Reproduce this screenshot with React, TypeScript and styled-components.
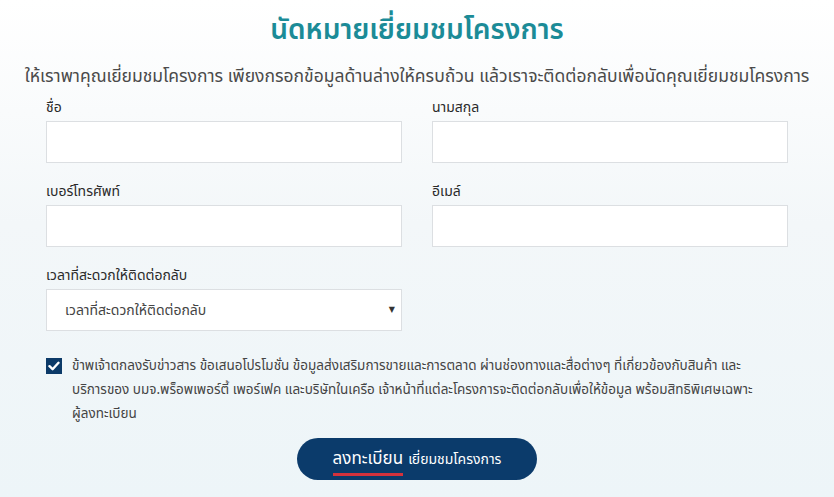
import React, { useState } from 'react';
import styled, { createGlobalStyle } from 'styled-components';

const GlobalStyle = createGlobalStyle`
  html, body {
    margin: 0;
    padding: 0;
  }
  body {
    font-family: "Noto Sans Thai", "Noto Sans", "DejaVu Sans", sans-serif;
    background: #fff;
  }
`;

type Field = {
  id: string,
  label: string,
  type: string,
}

const fields: Field[] = [
  { id: 'firstname', label: 'ชื่อ', type: 'text' },
  { id: 'lastname', label: 'นามสกุล', type: 'text' },
  { id: 'phone', label: 'เบอร์โทรศัพท์', type: 'tel' },
  { id: 'email', label: 'อีเมล์', type: 'email' },
];

const App = () => {
  const [agree, setAgree] = useState<boolean>(true);

  return (
    <>
      <GlobalStyle />
      <Page>
        <Title>นัดหมายเยี่ยมชมโครงการ</Title>
        <Lead>
          ให้เราพาคุณเยี่ยมชมโครงการ เพียงกรอกข้อมูลด้านล่างให้ครบถ้วน แล้วเราจะติดต่อกลับเพื่อนัดคุณเยี่ยมชมโครงการ
        </Lead>
        <Form onSubmit={e => e.preventDefault()}>
          <Grid>
            {fields.map(f => (
              <Group key={f.id}>
                <Label htmlFor={f.id}>{f.label}</Label>
                <Input id={f.id} type={f.type} />
              </Group>
            ))}
            <Group>
              <Label htmlFor="time">เวลาที่สะดวกให้ติดต่อกลับ</Label>
              <SelectBox>
                <Select id="time" defaultValue="">
                  <option value="">เวลาที่สะดวกให้ติดต่อกลับ</option>
                  <option value="morning">09:00 - 12:00</option>
                  <option value="afternoon">12:00 - 17:00</option>
                </Select>
                <Caret>▼</Caret>
              </SelectBox>
            </Group>
          </Grid>
          <Consent>
            <Check $checked={agree} onClick={() => setAgree(!agree)}>
              {agree && (
                <svg width="12" height="10" viewBox="0 0 12 10">
                  <path d="M1.5 5.2 L4.6 8.2 L10.5 1.8" fill="none" stroke="#fff" strokeWidth="2.4" strokeLinecap="round" strokeLinejoin="round" />
                </svg>
              )}
            </Check>
            <ConsentText>
              ข้าพเจ้าตกลงรับข่าวสาร ข้อเสนอโปรโมชั่น ข้อมูลส่งเสริมการขายและการตลาด ผ่านช่องทางและสื่อต่างๆ ที่เกี่ยวข้องกับสินค้า และ<br />
              บริการของ บมจ.พร็อพเพอร์ตี้ เพอร์เฟค และบริษัทในเครือ เจ้าหน้าที่แต่ละโครงการจะติดต่อกลับเพื่อให้ข้อมูล พร้อมสิทธิพิเศษเฉพาะ<br />
              ผู้ลงทะเบียน
            </ConsentText>
          </Consent>
          <Actions>
            <Submit type="submit">
              <Strong>ลงทะเบียน</Strong>
              <Small>เยี่ยมชมโครงการ</Small>
            </Submit>
          </Actions>
        </Form>
      </Page>
    </>
  );
};

const Page = styled.div`
  min-height: 497px;
  box-sizing: border-box;
  padding: 9px 0 0;
  background: linear-gradient(180deg, #ffffff 0%, #f3f7f9 45%, #edf5f8 100%);
  display: flex;
  flex-direction: column;
  align-items: center;
`;

const Title = styled.h1`
  margin: 0;
  font-size: 28px;
  font-weight: 600;
  line-height: 44px;
  color: #1b8b97;
`;

const Lead = styled.p`
  margin: 12px 0 0;
  font-size: 17.5px;
  line-height: 24px;
  color: #4a4a4a;
  white-space: nowrap;
`;

const Form = styled.form`
  width: 742px;
  margin-top: 9px;
`;

const Grid = styled.div`
  display: grid;
  grid-template-columns: 1fr 1fr;
  column-gap: 30px;
  row-gap: 19px;
`;

const Group = styled.div`
  display: flex;
  flex-direction: column;
`;

const Label = styled.label`
  font-size: 14px;
  font-weight: 400;
  line-height: 20px;
  color: #2a2a2a;
  margin-bottom: 3px;
`;

const Input = styled.input`
  height: 42px;
  box-sizing: border-box;
  border: 1px solid #dcdfe2;
  background: #fff;
  padding: 0 20px;
  font: inherit;
  font-size: 14px;
  outline: none;
`;

const SelectBox = styled.div`
  position: relative;
`;

const Select = styled.select`
  width: 100%;
  height: 42px;
  box-sizing: border-box;
  border: 1px solid #dcdfe2;
  border-radius: 0;
  background: #fff;
  padding: 0 18px;
  font: inherit;
  font-size: 14px;
  color: #444;
  appearance: none;
  outline: none;
`;

const Caret = styled.span`
  position: absolute;
  right: 7px;
  top: 50%;
  transform: translateY(-50%);
  font-size: 8px;
  color: #333;
  pointer-events: none;
`;

const Consent = styled.div`
  display: flex;
  align-items: flex-start;
  gap: 10px;
  margin-top: 23px;
`;

const Check = styled.span<{$checked: boolean}>`
  flex: none;
  width: 16px;
  height: 16px;
  margin-top: 4px;
  display: flex;
  align-items: center;
  justify-content: center;
  background: ${({$checked}) => $checked ? '#0c3a68' : '#fff'};
  border: 1px solid #0c3a68;
  box-sizing: border-box;
  cursor: pointer;
`;

const ConsentText = styled.p`
  margin: 0;
  font-size: 13.5px;
  line-height: 24px;
  color: #444;
`;

const Actions = styled.div`
  display: flex;
  justify-content: center;
  margin-top: 12px;
`;

const Submit = styled.button`
  width: 240px;
  height: 42px;
  border: none;
  border-radius: 21px;
  background: #0b3b6b;
  color: #fff;
  font: inherit;
  display: flex;
  align-items: center;
  justify-content: center;
  gap: 5px;
  cursor: pointer;
`;

const Strong = styled.span`
  position: relative;
  font-size: 17px;
  &::after {
    content: "";
    position: absolute;
    left: 0;
    right: 0;
    bottom: -4px;
    height: 3px;
    background: #d4323c;
  }
`;

const Small = styled.span`
  font-size: 14px;
`;

export default App;
